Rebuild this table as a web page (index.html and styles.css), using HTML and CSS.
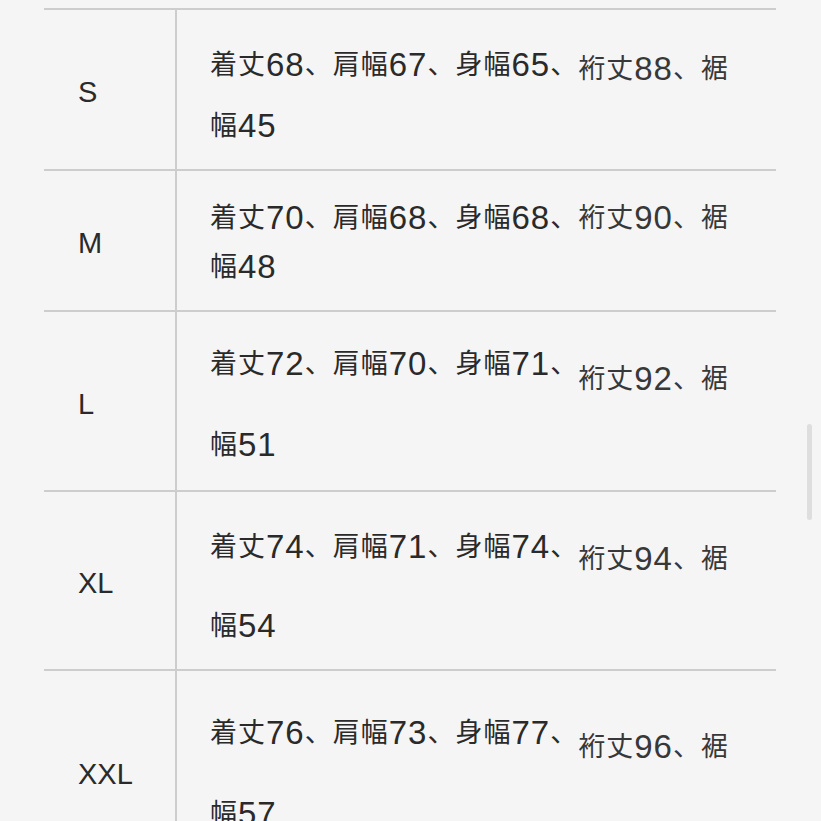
FILE: index.html
```html
<!DOCTYPE html>
<html lang="ja">
<head>
<meta charset="utf-8">
<link rel="stylesheet" href="styles.css">
</head>
<body>
<div class="page">
  <div class="table">
    <div class="row row-s">
      <div class="size">S</div>
      <div class="desc">
        <div class="line">着丈<span class="n">68</span>、肩幅<span class="n">67</span>、身幅<span class="n">65</span>、<span class="drop">裄丈<span class="n">88</span>、裾</span></div>
        <div class="line">幅<span class="n">45</span></div>
      </div>
    </div>
    <div class="row row-m">
      <div class="size">M</div>
      <div class="desc">
        <div class="line">着丈<span class="n">70</span>、肩幅<span class="n">68</span>、身幅<span class="n">68</span>、<span class="drop">裄丈<span class="n">90</span>、裾</span></div>
        <div class="line">幅<span class="n">48</span></div>
      </div>
    </div>
    <div class="row row-l">
      <div class="size">L</div>
      <div class="desc">
        <div class="line">着丈<span class="n">72</span>、肩幅<span class="n">70</span>、身幅<span class="n">71</span>、<span class="drop">裄丈<span class="n">92</span>、裾</span></div>
        <div class="line">幅<span class="n">51</span></div>
      </div>
    </div>
    <div class="row row-xl">
      <div class="size">XL</div>
      <div class="desc">
        <div class="line">着丈<span class="n">74</span>、肩幅<span class="n">71</span>、身幅<span class="n">74</span>、<span class="drop">裄丈<span class="n">94</span>、裾</span></div>
        <div class="line">幅<span class="n">54</span></div>
      </div>
    </div>
    <div class="row row-xxl">
      <div class="size">XXL</div>
      <div class="desc">
        <div class="line">着丈<span class="n">76</span>、肩幅<span class="n">73</span>、身幅<span class="n">77</span>、<span class="drop">裄丈<span class="n">96</span>、裾</span></div>
        <div class="line">幅<span class="n">57</span></div>
      </div>
    </div>
  </div>
  <div class="scrollbar"></div>
</div>
</body>
</html>
```
FILE: styles.css
```css
html, body {
  margin: 0;
  padding: 0;
  background: #f5f5f5;
  overflow: hidden;
}
.page {
  width: 821px;
  height: 821px;
  overflow: hidden;
  padding-top: 8px;
  box-sizing: border-box;
}
.table {
  margin-left: 44px;
  width: 732px;
}
.row {
  display: grid;
  grid-template-columns: 131px 1fr;
  border-top: 2px solid #cdcdcd;
}
.size {
  display: flex;
  align-items: center;
  padding-left: 34px;
  padding-top: 6px;
  font-family: "Liberation Sans", Arial, sans-serif;
  font-size: 29px;
  color: #2a2a2a;
}
.desc {
  border-left: 2px solid #cdcdcd;
  padding-left: 33px;
  display: flex;
  flex-direction: column;
  font-family: "Noto Sans CJK JP", sans-serif;
  font-size: 27px;
  color: #2a2a2a;
}
.line {
  height: 40px;
  line-height: 40px;
  white-space: nowrap;
  letter-spacing: 1px;
}
.n {
  font-family: "Liberation Sans", Arial, sans-serif;
  font-size: 33px;
  vertical-align: -2px;
}
.drop {
  color: #383838;
}
.row-s { height: 159px; }
.row-s .desc { padding-top: 33px; gap: 21px; }
.row-s .drop { vertical-align: -4px; }
.row-m { height: 139px; }
.row-m .desc { padding-top: 25px; gap: 9px; }
.row-m .drop { vertical-align: 0; }
.row-l { height: 178px; }
.row-l .desc { padding-top: 30px; gap: 41px; }
.row-l .drop { vertical-align: -15px; }
.row-xl { height: 177px; }
.row-xl .desc { padding-top: 33px; gap: 39px; }
.row-xl .drop { vertical-align: -12px; }
.row-xxl { height: 200px; }
.row-xxl .desc { padding-top: 40px; gap: 41px; }
.row-xxl .drop { vertical-align: -14px; }
.scrollbar {
  position: absolute;
  left: 807px;
  top: 424px;
  width: 5px;
  height: 96px;
  border-radius: 3px;
  background: #dedede;
}
```
